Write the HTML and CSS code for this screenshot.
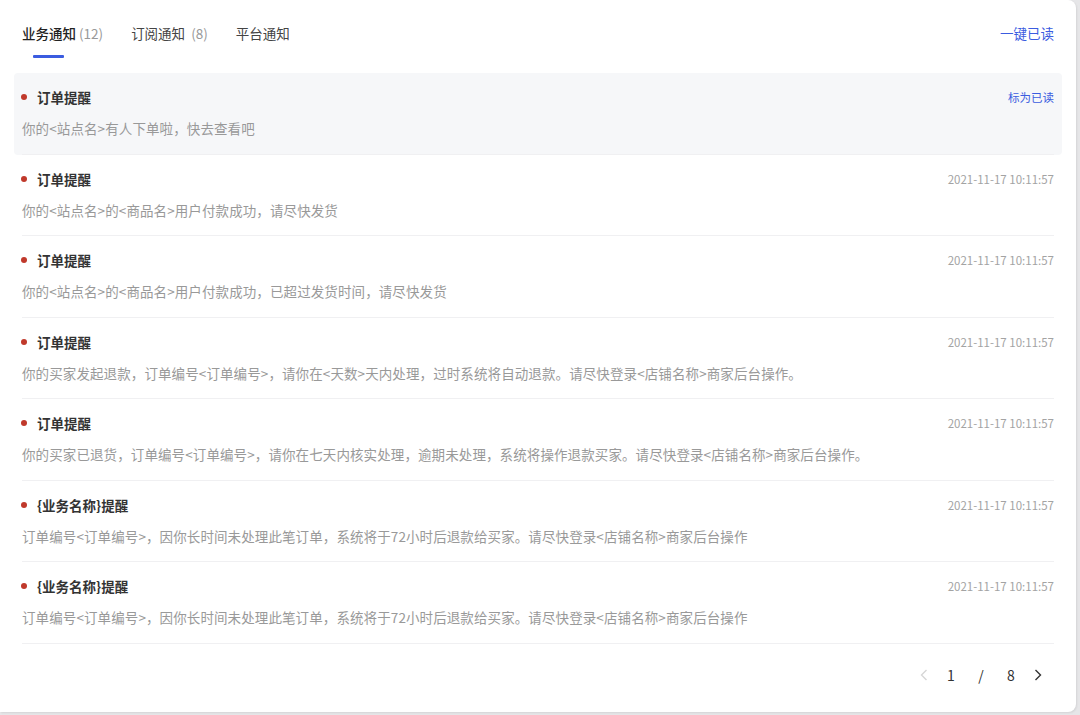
FILE: index.html
```html
<!DOCTYPE html>
<html lang="zh-CN">
<head>
<meta charset="utf-8">
<title>消息通知</title>
<link rel="stylesheet" href="styles.css">
</head>
<body>
<div class="card">
  <div class="header">
    <div class="tabs">
      <div class="tab active"><span class="tab-label">业务通知</span><span class="count">(12)</span></div>
      <div class="tab"><span class="tab-label">订阅通知</span><span class="count wide">(8)</span></div>
      <div class="tab"><span class="tab-label">平台通知</span></div>
    </div>
    <a class="read-all">一键已读</a>
  </div>
  <ul class="list">
    <li class="item hover">
      <div class="item-inner">
        <div class="item-top"><span class="dot"></span><span class="title">订单提醒</span><a class="mark">标为已读</a></div>
        <div class="desc">你的&lt;站点名&gt;有人下单啦，快去查看吧</div>
      </div>
    </li>
    <li class="item">
      <div class="item-inner">
        <div class="item-top"><span class="dot"></span><span class="title">订单提醒</span><span class="time">2021-11-17 10:11:57</span></div>
        <div class="desc">你的&lt;站点名&gt;的&lt;商品名&gt;用户付款成功，请尽快发货</div>
      </div>
    </li>
    <li class="item">
      <div class="item-inner">
        <div class="item-top"><span class="dot"></span><span class="title">订单提醒</span><span class="time">2021-11-17 10:11:57</span></div>
        <div class="desc">你的&lt;站点名&gt;的&lt;商品名&gt;用户付款成功，已超过发货时间，请尽快发货</div>
      </div>
    </li>
    <li class="item">
      <div class="item-inner">
        <div class="item-top"><span class="dot"></span><span class="title">订单提醒</span><span class="time">2021-11-17 10:11:57</span></div>
        <div class="desc">你的买家发起退款，订单编号&lt;订单编号&gt;，请你在&lt;天数&gt;天内处理，过时系统将自动退款。请尽快登录&lt;店铺名称&gt;商家后台操作。</div>
      </div>
    </li>
    <li class="item">
      <div class="item-inner">
        <div class="item-top"><span class="dot"></span><span class="title">订单提醒</span><span class="time">2021-11-17 10:11:57</span></div>
        <div class="desc">你的买家已退货，订单编号&lt;订单编号&gt;，请你在七天内核实处理，逾期未处理，系统将操作退款买家。请尽快登录&lt;店铺名称&gt;商家后台操作。</div>
      </div>
    </li>
    <li class="item">
      <div class="item-inner">
        <div class="item-top"><span class="dot"></span><span class="title">{业务名称}提醒</span><span class="time">2021-11-17 10:11:57</span></div>
        <div class="desc">订单编号&lt;订单编号&gt;，因你长时间未处理此笔订单，系统将于72小时后退款给买家。请尽快登录&lt;店铺名称&gt;商家后台操作</div>
      </div>
    </li>
    <li class="item">
      <div class="item-inner">
        <div class="item-top"><span class="dot"></span><span class="title">{业务名称}提醒</span><span class="time">2021-11-17 10:11:57</span></div>
        <div class="desc">订单编号&lt;订单编号&gt;，因你长时间未处理此笔订单，系统将于72小时后退款给买家。请尽快登录&lt;店铺名称&gt;商家后台操作</div>
      </div>
    </li>
  </ul>
  <div class="pager">
    <span class="arrow disabled"><svg width="8" height="12" viewBox="0 0 8 12"><path d="M6.5 1 L1.5 6 L6.5 11" fill="none" stroke="currentColor" stroke-width="1.4"/></svg></span>
    <span class="num">1</span>
    <span class="num">/</span>
    <span class="num">8</span>
    <span class="arrow"><svg width="8" height="12" viewBox="0 0 8 12"><path d="M1.5 1 L6.5 6 L1.5 11" fill="none" stroke="currentColor" stroke-width="1.4"/></svg></span>
  </div>
</div>
</body>
</html>
```

FILE: styles.css
```css
* { box-sizing: border-box; }
html, body { margin: 0; padding: 0; }
body {
  background: #e6e6e8;
  font-family: "Noto Sans CJK SC", "Noto Sans", sans-serif;
  width: 1080px;
  height: 715px;
  overflow: hidden;
}
.card {
  width: 1076px;
  height: 712px;
  background: #fff;
  border-radius: 0 8px 8px 0;
  box-shadow: 1px 1px 2px rgba(0,0,0,0.08);
  display: flex;
  flex-direction: column;
}
.header {
  height: 73px;
  display: flex;
  justify-content: space-between;
  padding: 0 22px;
}
.tabs { display: flex; gap: 28px; }
.tab {
  position: relative;
  padding-top: 23px;
  font-size: 13.5px;
  line-height: 20px;
  color: #444;
  height: 58px;
}
.tab .count { color: #999; margin-left: 3px; }
.tab .count.wide { margin-left: 6px; }
.tab.active .tab-label { color: #222; font-weight: 500; }
.tab.active::after {
  content: "";
  position: absolute;
  left: 11px;
  top: 55px;
  width: 31px;
  height: 3px;
  border-radius: 1px;
  background: #3b5ce0;
}
.read-all {
  padding-top: 23px;
  font-size: 13.5px;
  line-height: 20px;
  color: #3b5ce0;
  cursor: pointer;
}
.list {
  list-style: none;
  margin: 0;
  padding: 0 14px;
}
.item {
  padding: 0 8px;
  border-radius: 4px;
}
.item.hover { background: #f6f7f9; }
.item-inner {
  padding: 14px 0 15.5px;
  border-bottom: 1px solid #f0f0f2;
}
.item-top {
  display: flex;
  align-items: center;
  height: 20px;
}
.dot {
  width: 6px;
  height: 6px;
  border-radius: 50%;
  background: #c0392b;
  margin: 0 10px 0 -1px;
}
.title {
  font-size: 13.5px;
  font-weight: 700;
  color: #333;
  flex: 1;
}
.mark {
  font-size: 11.5px;
  color: #3b5ce0;
}
.time {
  font-size: 11.5px;
  color: #a3a3a3;
}
.desc {
  margin-top: 11px;
  font-size: 13.5px;
  letter-spacing: 0.1px;
  line-height: 20px;
  color: #999;
}
.pager {
  display: flex;
  justify-content: flex-end;
  align-items: center;
  padding: 21px 34px 0 0;
  height: 41px;
  font-size: 14px;
  color: #333;
}
.pager .arrow { display: flex; align-items: center; color: #333; }
.pager .arrow.disabled { color: #d6d6d6; margin-right: 8px; }
.pager .num { width: 30px; text-align: center; }
.pager .num + .arrow { margin-left: 8px; }
```
